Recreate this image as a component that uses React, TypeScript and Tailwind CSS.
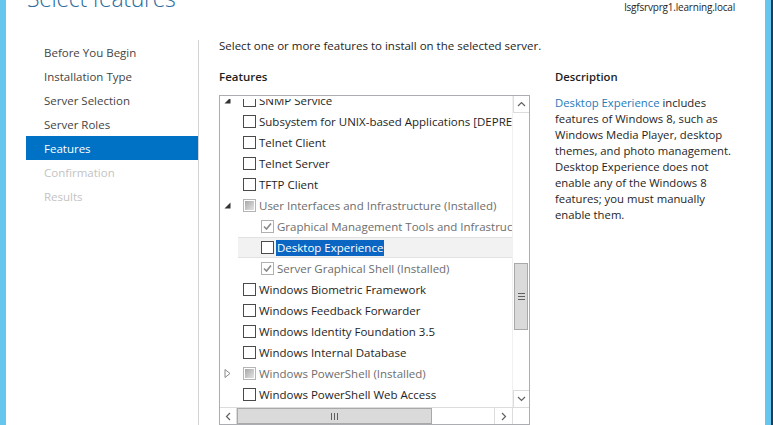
import React from "react";

const font = { fontFamily: "'Open Sans', 'Noto Sans', sans-serif" };

const steps = [
  { label: "Before You Begin", state: "done" },
  { label: "Installation Type", state: "done" },
  { label: "Server Selection", state: "done" },
  { label: "Server Roles", state: "done" },
  { label: "Features", state: "active" },
  { label: "Confirmation", state: "off" },
  { label: "Results", state: "off" },
];

type Row = {
  label: string;
  level: 0 | 1;
  box: "empty" | "checked" | "partial";
  arrow?: "open" | "closed";
  installed?: boolean;
  selected?: boolean;
};

const rows: Row[] = [
  { label: "SNMP Service", level: 0, box: "empty", arrow: "open" },
  { label: "Subsystem for UNIX-based Applications [DEPRECATED]", level: 0, box: "empty" },
  { label: "Telnet Client", level: 0, box: "empty" },
  { label: "Telnet Server", level: 0, box: "empty" },
  { label: "TFTP Client", level: 0, box: "empty" },
  { label: "User Interfaces and Infrastructure (Installed)", level: 0, box: "partial", arrow: "open", installed: true },
  { label: "Graphical Management Tools and Infrastructure (Installed)", level: 1, box: "checked", installed: true },
  { label: "Desktop Experience", level: 1, box: "empty", selected: true },
  { label: "Server Graphical Shell (Installed)", level: 1, box: "checked", installed: true },
  { label: "Windows Biometric Framework", level: 0, box: "empty" },
  { label: "Windows Feedback Forwarder", level: 0, box: "empty" },
  { label: "Windows Identity Foundation 3.5", level: 0, box: "empty" },
  { label: "Windows Internal Database", level: 0, box: "empty" },
  { label: "Windows PowerShell (Installed)", level: 0, box: "partial", arrow: "closed", installed: true },
  { label: "Windows PowerShell Web Access", level: 0, box: "empty" },
];

function CheckBox({ kind }: { kind: Row["box"] }) {
  if (kind === "partial") {
    return (
      <span className="w-[13px] h-[13px] border border-[#b5b5b5] bg-white flex items-center justify-center shrink-0">
        <span className="w-[9px] h-[9px] bg-gradient-to-br from-[#a8a8a8] to-[#e4e4e4]" />
      </span>
    );
  }
  return (
    <span
      className={`w-[13px] h-[13px] border bg-white flex items-center justify-center shrink-0 ${
        kind === "checked" ? "border-[#b0b0b0]" : "border-[#4a4a4a]"
      }`}
    >
      {kind === "checked" && (
        <svg width="9" height="9" viewBox="0 0 9 9">
          <path d="M1 4.5 L3.5 7 L8 1.5" fill="none" stroke="#8a8a8a" strokeWidth="1.6" />
        </svg>
      )}
    </span>
  );
}

function Arrow({ kind }: { kind?: "open" | "closed" }) {
  if (!kind) return null;
  return kind === "open" ? (
    <svg width="7" height="7" viewBox="0 0 7 7">
      <path d="M6.5 0.5 L6.5 6.5 L0.5 6.5 Z" fill="#333" />
    </svg>
  ) : (
    <svg width="7" height="9" viewBox="0 0 7 9">
      <path d="M1 0.5 L6 4.5 L1 8.5 Z" fill="none" stroke="#8a8a8a" />
    </svg>
  );
}

function FeatureRow({ row }: { row: Row }) {
  return (
    <div
      className={`h-[21px] flex items-center whitespace-nowrap ${
        row.selected ? "ml-[18px] bg-[#f2f2f2] border-y border-[#e2e2e2]" : ""
      }`}
      style={{ paddingLeft: row.level === 1 ? (row.selected ? 23 : 41) : 4 }}
    >
      {row.level === 0 && (
        <span className="w-[19px] shrink-0 flex items-center">
          <Arrow kind={row.arrow} />
        </span>
      )}
      <CheckBox kind={row.box} />
      <span
        className={`ml-[2px] px-[1px] leading-[16px] ${
          row.selected
            ? "bg-[#0a66c2] text-white"
            : row.installed
            ? "text-[#6d6d6d]"
            : "text-[#1e1e1e]"
        }`}
      >
        {row.label}
      </span>
    </div>
  );
}

export default function App() {
  return (
    <div className="w-[773px] h-[425px] overflow-hidden flex bg-white text-[11.5px]" style={font}>
      <div className="w-[6px] bg-[#66c6ee] shrink-0" />

      <div className="flex-1 flex flex-col min-w-0">
        {/* Header */}
        <div className="h-[38px] flex justify-between shrink-0 overflow-hidden">
          <div className="pl-[21px] -mt-[18px] text-[23px] tracking-[-0.3px] font-light text-[#2a6c9e] leading-[32px] whitespace-nowrap">
            Select features
          </div>
          <div className="pr-[30px] pt-px text-[10px] tracking-[-0.2px] leading-[12px] text-[#1e1e1e]">
            lsgfsrvprg1.learning.local
          </div>
        </div>

        <div className="flex flex-1 min-h-0">
          {/* Steps */}
          <div className="w-[192px] pt-[2px] pl-[20px] shrink-0">
            {steps.map((s) => (
              <div
                key={s.label}
                className={`h-[24px] flex items-center pl-[18px] pt-[2px] ${
                  s.state === "active"
                    ? "bg-[#0072c6] text-white"
                    : s.state === "off"
                    ? "text-[#c3c3c3]"
                    : "text-[#444444]"
                }`}
              >
                {s.label}
              </div>
            ))}
          </div>

          <div className="w-px bg-[#d4d4d4] mt-[2px]" />

          {/* Content */}
          <div className="flex-1 pl-[20px] flex gap-[25px]">
            <div className="w-[311px] flex flex-col shrink-0">
              <div className="h-[16px] leading-[16px] text-[#1e1e1e] whitespace-nowrap">
                Select one or more features to install on the selected server.
              </div>
              <div className="mt-[15px] h-[16px] leading-[16px] font-semibold text-[#1e1e1e]">
                Features
              </div>

              {/* List box */}
              <div className="mt-[10px] flex-1 border border-[#abadb3] flex flex-col min-h-0">
                <div className="flex flex-1 min-h-0">
                  <div className="flex-1 pt-[3px] min-w-0 flex flex-col">
                    <div className="flex-1 overflow-hidden">
                      <div className="-mt-[9px]">
                        {rows.map((r) => (
                          <FeatureRow key={r.label} row={r} />
                        ))}
                      </div>
                    </div>
                  </div>

                  {/* Vertical scrollbar */}
                  <div className="w-[17px] flex flex-col border-l border-[#f0f0f0] shrink-0">
                    <div className="h-[17px] flex items-center justify-center border-b border-l border-[#dcdcdc]">
                      <svg width="9" height="6" viewBox="0 0 9 6">
                        <path d="M1 5 L4.5 1.5 L8 5" fill="none" stroke="#606060" strokeWidth="1.2" />
                      </svg>
                    </div>
                    <div className="flex-1 flex flex-col">
                      <div className="h-[150px]" />
                      <div className="h-[67px] mx-[1px] bg-[#dadada] border border-[#a9a9a9] flex items-center justify-center">
                        <svg width="7" height="7" viewBox="0 0 7 7">
                          <path d="M0 0.5 H7 M0 3.5 H7 M0 6.5 H7" stroke="#606060" />
                        </svg>
                      </div>
                      <div className="flex-1" />
                    </div>
                    <div className="h-[17px] flex items-center justify-center border-t border-l border-[#dcdcdc]">
                      <svg width="9" height="6" viewBox="0 0 9 6">
                        <path d="M1 1 L4.5 4.5 L8 1" fill="none" stroke="#606060" strokeWidth="1.2" />
                      </svg>
                    </div>
                  </div>
                </div>

                {/* Horizontal scrollbar */}
                <div className="h-[17px] flex shrink-0 border-t border-[#dcdcdc]">
                  <div className="w-[17px] flex items-center justify-center border-r border-[#dcdcdc]">
                    <svg width="6" height="9" viewBox="0 0 6 9">
                      <path d="M5 1 L1.5 4.5 L5 8" fill="none" stroke="#606060" strokeWidth="1.2" />
                    </svg>
                  </div>
                  <div className="flex-1 flex">
                    <div className="w-[195px] bg-[#dadada] border border-[#a9a9a9] flex items-center justify-center">
                      <svg width="7" height="7" viewBox="0 0 7 7">
                        <path d="M0.5 0 V7 M3.5 0 V7 M6.5 0 V7" stroke="#606060" />
                      </svg>
                    </div>
                    <div className="flex-1" />
                  </div>
                  <div className="w-[18px] flex items-center justify-center border-l border-[#dcdcdc]">
                    <svg width="6" height="9" viewBox="0 0 6 9">
                      <path d="M1 1 L4.5 4.5 L1 8" fill="none" stroke="#606060" strokeWidth="1.2" />
                    </svg>
                  </div>
                  <div className="w-[17px] border-l border-[#dcdcdc]" />
                </div>
              </div>
            </div>

            {/* Description */}
            <div className="pt-[31px] w-[205px] text-[#1e1e1e] text-[11.3px]">
              <div className="h-[16px] leading-[16px] font-semibold">Description</div>
              <p className="mt-[10px] leading-[16px] whitespace-nowrap">
                <span className="text-[#1f7ab8]">Desktop Experience</span> includes
                <br />
                features of Windows 8, such as
                <br />
                Windows Media Player, desktop
                <br />
                themes, and photo management.
                <br />
                Desktop Experience does not
                <br />
                enable any of the Windows 8
                <br />
                features; you must manually
                <br />
                enable them.
              </p>
            </div>
          </div>
        </div>
      </div>

      <div className="w-[6px] bg-[#66c6ee] shrink-0" />
      <div className="w-[2px] bg-[#1d3c5a] shrink-0" />
    </div>
  );
}
